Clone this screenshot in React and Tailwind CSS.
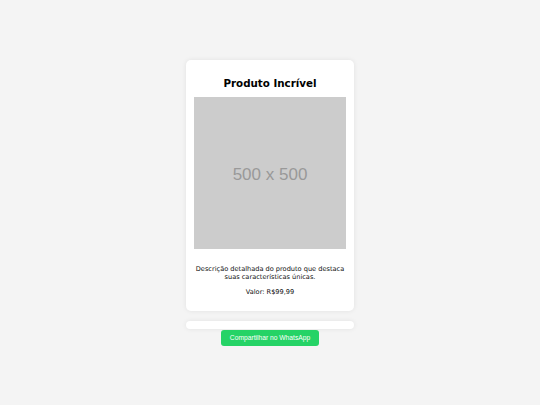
export default function App() {
  return (
    <div className="min-h-[405px] w-full bg-[#f4f4f4] flex flex-col items-center pt-[60px]" style={{ fontFamily: '"DejaVu Sans", sans-serif' }}>
      <div className="w-[168px] bg-white rounded-[5px] shadow-[0_0_5px_rgba(0,0,0,0.08)] px-[8px] pb-[8px] flex flex-col items-center">
        <h2 className="text-[10.3px] font-bold text-black leading-[15px] mt-[16px] mb-[6px]">Produto Incrível</h2>
        <div className="w-[152px] h-[152px] bg-[#cccccc] flex items-center justify-center pt-[4px]">
          <span className="text-[#999999] text-[17px]" style={{ fontFamily: '"Liberation Sans", Arial, sans-serif' }}>500 x 500</span>
        </div>
        <p className="text-[6.6px] leading-[8px] text-[#111] text-center mt-[16px]">Descrição detalhada do produto que destaca suas características únicas.</p>
        <p className="text-[6.6px] leading-[8px] text-[#111] text-center mt-[7px] mb-[7px]">Valor: R$99,99</p>
      </div>
      <div className="w-[168px] h-[8px] bg-white rounded-[5px] shadow-[0_0_5px_rgba(0,0,0,0.08)] mt-[10px]"></div>
      <button className="mt-[1px] h-[16px] w-[98px] bg-[#25d366] rounded-[3px] text-white text-[6.7px] flex items-center justify-center" style={{ fontFamily: '"Liberation Sans", Arial, sans-serif' }}>Compartilhar no WhatsApp</button>
    </div>
  );
}
